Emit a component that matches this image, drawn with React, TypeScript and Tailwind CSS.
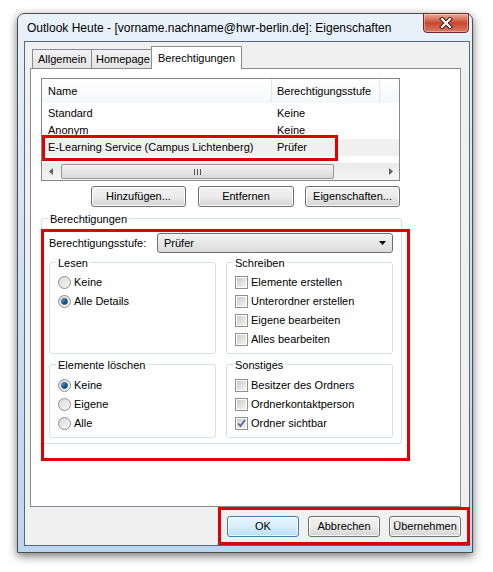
import React from "react";

const btn =
  "flex items-center justify-center h-[21px] rounded-[3px] border border-[#707070] bg-gradient-to-b from-[#f2f2f2] via-[#ebebeb] to-[#d4d4d4] text-[11px] leading-none text-black shadow-[inset_0_0_0_1px_rgba(255,255,255,0.8)]";

const Radio = ({checked}: {checked?: boolean}) => (
  <span className="flex items-center justify-center w-[13px] h-[13px] rounded-full border border-[#8e8f8f] bg-gradient-to-br from-[#d8d8d8] to-[#f8f8f8] shrink-0">
    {checked && <span className="w-[7px] h-[7px] rounded-full bg-gradient-to-br from-[#7fc4ea] via-[#1b5f99] to-[#0d3c6b] border border-[#1c4e7e]" />}
  </span>
);

const Check = ({checked}: {checked?: boolean}) => (
  <span className="flex items-center justify-center w-[13px] h-[13px] border border-[#8e8f8f] bg-white p-[1px] shrink-0">
    <span className="flex items-center justify-center w-full h-full bg-gradient-to-br from-[#cbcbcb] to-[#f4f4f4]">
      {checked && (
        <svg width="9" height="9" viewBox="0 0 9 9">
          <path d="M1 4.5 L3.5 7 L8 1" fill="none" stroke="#4a5f97" strokeWidth="1.6" />
        </svg>
      )}
    </span>
  </span>
);

const Group = ({label, className, children}: {label: string; className: string; children?: React.ReactNode}) => (
  <div className={`flex flex-col border border-[#d5dfe5] rounded-[3px] ${className}`}>
    <span className="self-start -mt-[7px] ml-[6px] px-[2px] h-[14px] leading-[14px] bg-white">{label}</span>
    {children}
  </div>
);

const Row = ({children}: {children: React.ReactNode}) => <div className="flex items-center gap-[3px] h-[19px] pl-[8px] whitespace-nowrap">{children}</div>;

const ListView = () => (
  <div className="flex flex-col ml-[10px] mt-[9px] w-[359px] h-[103px] border border-[#828790] bg-white whitespace-nowrap">
    <div className="flex h-[24px] shrink-0 bg-gradient-to-b from-white to-[#f6f7f9]">
      <div className="w-[230px] flex items-center pl-[6px] border-r border-[#e5e5e5]">Name</div>
      <div className="w-[108px] flex items-center pl-[5px] border-r border-[#e5e5e5]">Berechtigungsstufe</div>
    </div>
    <div className="flex flex-col pt-[2px]">
      {[
        ["Standard", "Keine", false],
        ["Anonym", "Keine", false],
        ["E-Learning Service (Campus Lichtenberg)", "Prüfer", true],
      ].map(([n, l, sel]) => (
        <div key={n as string} className={`flex h-[17px] items-center ${sel ? "bg-[#f0f0f0]" : ""}`}>
          <span className="w-[230px] pl-[6px]">{n}</span>
          <span className="pl-[5px]">{l}</span>
        </div>
      ))}
    </div>
    <div className="mt-auto flex items-center h-[17px] bg-gradient-to-b from-[#eaeaea] to-[#f5f5f5]">
      <div className="w-[17px] h-full flex items-center justify-center">
        <svg width="4" height="7" viewBox="0 0 4 7"><path d="M4 0 L0 3.5 L4 7Z" fill="#606060" /></svg>
      </div>
      <div className="ml-[2px] w-[273px] h-[15px] rounded-[2px] border border-[#979797] bg-gradient-to-b from-[#f3f3f3] to-[#d8d8d8] flex items-center justify-center gap-[2px]">
        <span className="w-px h-[6px] bg-[#555]" />
        <span className="w-px h-[6px] bg-[#555]" />
        <span className="w-px h-[6px] bg-[#555]" />
      </div>
      <div className="ml-auto w-[17px] h-full flex items-center justify-center">
        <svg width="4" height="7" viewBox="0 0 4 7"><path d="M0 0 L4 3.5 L0 7Z" fill="#606060" /></svg>
      </div>
    </div>
  </div>
);

export default function App() {
  return (
    <div className="relative w-[493px] h-[572px] bg-white pl-[17px] pt-[13px] font-['Liberation_Sans',Arial,sans-serif] text-[11px] text-black">
      <div className="flex flex-col w-[456px] h-[540px] rounded-t-[7px] border border-[#4d4d4d] bg-gradient-to-b from-[#e9f1fa] via-[#cfe0f3] to-[#bcd5ee] shadow-[0_3px_10px_rgba(0,0,0,0.55)]">
        <div className="flex h-[27px] shrink-0">
          <div className="flex-1 flex items-center pl-[9px] text-[12px] text-black whitespace-nowrap">
            Outlook Heute - [vorname.nachname@hwr-berlin.de]: Eigenschaften
          </div>
          <div className="mr-[3px] -mt-px w-[46px] h-[20px] rounded-b-[4px] border border-[#6b2a22] bg-gradient-to-b from-[#e9a998] via-[#c9462f] to-[#d77a63] flex items-center justify-center shadow-[inset_0_0_0_1px_rgba(255,255,255,0.35)]">
            <svg width="14" height="12" viewBox="0 0 14 12">
              <path d="M3 2 L11 10 M11 2 L3 10" stroke="#3c1a14" strokeWidth="4" strokeLinecap="square" />
              <path d="M3 2 L11 10 M11 2 L3 10" stroke="#ffffff" strokeWidth="2.2" strokeLinecap="square" />
            </svg>
          </div>
        </div>
        <div className="flex flex-col ml-[6px] w-[446px] h-[505px] border border-[#55687c] bg-[#f0f0f0]">
          <div className="flex items-end h-[22px] mt-[4px] ml-[7px] whitespace-nowrap">
            <div className="w-[59px] h-[19px] pl-[5px] flex items-center border border-b-0 border-r-0 border-[#898c95] bg-gradient-to-b from-[#f2f2f2] to-[#e3e3e3]">Allgemein</div>
            <div className="w-[61px] h-[19px] pl-[4px] flex items-center border border-b-0 border-[#898c95] bg-gradient-to-b from-[#f2f2f2] to-[#e3e3e3]">Homepage</div>
            <div className="relative z-[1] h-[23px] -mb-px -ml-px w-[91px] flex items-start pt-[3px] justify-center border border-b-0 border-[#898c95] bg-white">Berechtigungen</div>
          </div>
          <div className="flex flex-col ml-[5px] w-[431px] h-[439px] shrink-0 border border-[#898c95] bg-white">
            <ListView />
            <div className="flex mt-[5px] ml-[60px]">
              <button className={`${btn} w-[95px]`}>Hinzufügen...</button>
              <button className={`${btn} w-[96px] ml-[12px]`}>Entfernen</button>
              <button className={`${btn} w-[95px] ml-[11px]`}>Eigenschaften...</button>
            </div>
            <Group label="Berechtigungen" className="mt-[11px] ml-[10px] w-[361px] h-[226px]">
              <div className="flex items-center mt-[7px] pl-[7px]">
                <span className="w-[108px]">Berechtigungsstufe:</span>
                <div className="flex items-center w-[236px] h-[20px] pl-[6px] pr-[6px] rounded-[3px] border border-[#707070] bg-gradient-to-b from-[#f2f2f2] to-[#dcdcdc]">
                  <span className="flex-1">Prüfer</span>
                  <svg width="7" height="4" viewBox="0 0 7 4"><path d="M0 0 L7 0 L3.5 4Z" fill="#000" /></svg>
                </div>
              </div>
              <div className="flex gap-[10px] mt-[9px] ml-[7px]">
                <Group label="Lesen" className="w-[167px] h-[92px]">
                  <div className="mt-[3px]">
                    <Row><Radio /><span>Keine</span></Row>
                    <Row><Radio checked /><span>Alle Details</span></Row>
                  </div>
                </Group>
                <Group label="Schreiben" className="w-[167px] h-[92px]">
                  <div className="mt-[3px]">
                    <Row><Check /><span>Elemente erstellen</span></Row>
                    <Row><Check /><span>Unterordner erstellen</span></Row>
                    <Row><Check /><span>Eigene bearbeiten</span></Row>
                    <Row><Check /><span>Alles bearbeiten</span></Row>
                  </div>
                </Group>
              </div>
              <div className="flex gap-[10px] mt-[10px] ml-[7px]">
                <Group label="Elemente löschen" className="w-[167px] h-[74px]">
                  <div className="mt-[4px]">
                    <Row><Radio checked /><span>Keine</span></Row>
                    <Row><Radio /><span>Eigene</span></Row>
                    <Row><Radio /><span>Alle</span></Row>
                  </div>
                </Group>
                <Group label="Sonstiges" className="w-[167px] h-[74px]">
                  <div className="mt-[4px]">
                    <Row><Check /><span>Besitzer des Ordners</span></Row>
                    <Row><Check /><span>Ordnerkontaktperson</span></Row>
                    <Row><Check checked /><span>Ordner sichtbar</span></Row>
                  </div>
                </Group>
              </div>
            </Group>
          </div>
          <div className="flex justify-end gap-[9px] mt-[9px] pr-[8px]">
            <button className={`${btn} w-[72px] !border-[#3c7fb1] !from-[#e8f5fc] !via-[#d6eefb] !to-[#b9e0f5]`}>OK</button>
            <button className={`${btn} w-[72px]`}>Abbrechen</button>
            <button className={`${btn} w-[72px]`}>Übernehmen</button>
          </div>
        </div>
      </div>
      {/* annotation boxes */}
      <div className="absolute left-[42px] top-[135px] w-[296px] h-[26px] border-[3px] border-[#e00000]" />
      <div className="absolute left-[41px] top-[229px] w-[369px] h-[232px] border-[3px] border-[#e00000]" />
      <div className="absolute left-[218px] top-[507px] w-[252px] h-[38px] border-[3px] border-[#e00000]" />
    </div>
  );
}
